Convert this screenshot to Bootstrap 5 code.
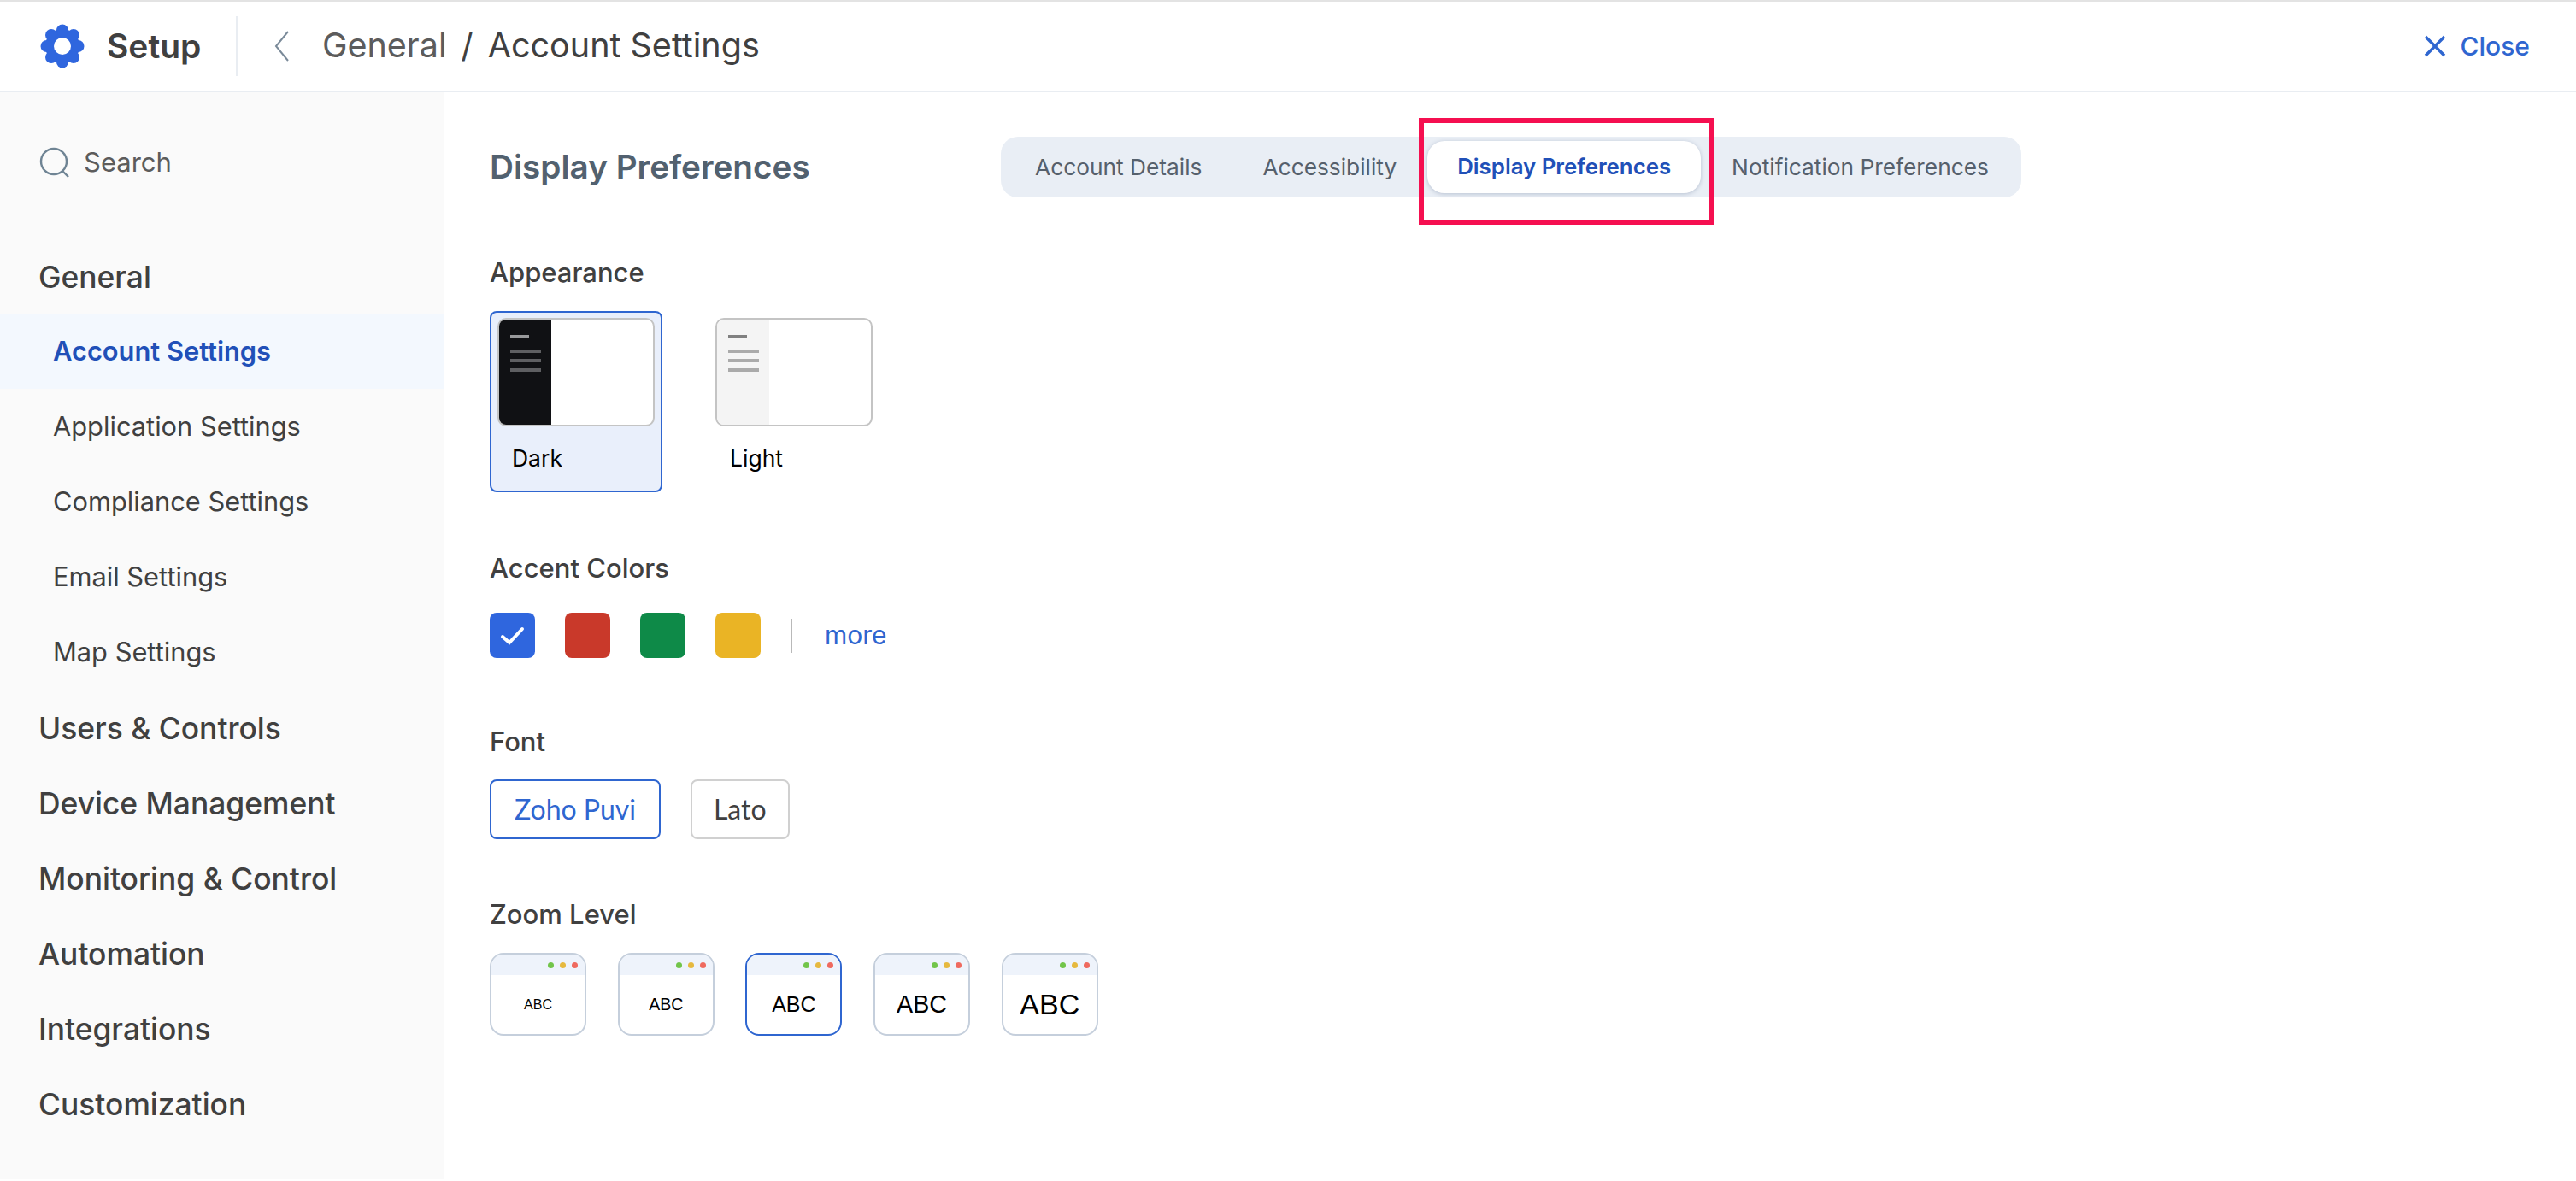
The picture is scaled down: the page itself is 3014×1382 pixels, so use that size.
<!DOCTYPE html>
<html lang="en">
<head>
    <meta charset="UTF-8">
    <meta name="viewport" content="width=device-width, initial-scale=1.0">
    <title>Display Preferences</title>
    <link href="https://cdn.jsdelivr.net/npm/bootstrap@5.3.0/dist/css/bootstrap.min.css" rel="stylesheet">
    <style>
        body { font-family: Inter, "Liberation Sans", sans-serif; color: #404040; background: #fff; height: 1382px; overflow: hidden; border-top: 2px solid #e3e3e3; }
        .top-bar { height: 106px; border-bottom: 2px solid #e9edf2; padding: 0 54px 0 47px; }
        .gear-icon { width: 52px; height: 52px; margin-right: 26px; }
        .app-name { font-size: 39px; font-weight: 600; width: 151px; }
        .bar-sep { width: 2px; height: 70px; background: #e9edf2; margin-right: 42px; }
        .back-icon { width: 20px; height: 38px; margin-right: 37px; }
        .crumb { font-size: 39.5px; color: #404040; }
        .crumb-root { color: #5c5c5c; }
        .crumb-slash { margin: 0 17px; }
        .close-link { color: #2f66d0; font-size: 30px; font-weight: 500; text-decoration: none; }
        .close-link svg { width: 26px; height: 26px; margin-right: 17px; }
        .side-col { width: 520px; height: 1272px; background: #fafafa; flex: none; }
        .side-search { height: 164px; padding-left: 46px; margin-bottom: 7px; color: #5c5c5c; font-size: 31px; }
        .side-search svg { width: 36px; height: 36px; margin-right: 16px; }
        .side-group, .side-item { height: 88px; display: flex; align-items: center; text-decoration: none; }
        .side-group { padding: 3px 0 0 45px; font-size: 35.4px; font-weight: 500; color: #404040; }
        .side-item { padding-left: 62px; font-size: 30.8px; color: #404040; }
        .side-item.active { background: #f3f8fe; color: #2150b8; font-weight: 600; }
        .main-col { padding: 52px 0 0 53px; }
        .page-title { width: 598px; font-size: 38.7px; font-weight: 600; color: #52616f; }
        .tab-strip { width: 1194px; height: 71px; padding: 5px; background: #e9eef5; border-radius: 20px; gap: 1px; position: relative; }
        .tab-btn { padding: 0 35px; font-size: 26.3px; color: #56606c; display: flex; align-items: center; text-decoration: none; white-space: nowrap; }
        .tab-btn.active { background: #fff; color: #2150b8; font-size: 25.8px; font-weight: 600; border-radius: 20px; box-shadow: 0 1px 5px rgba(70, 90, 130, .3); }
        .mark-box { position: absolute; left: 489px; top: -22px; width: 346px; height: 125px; border: 6px solid #f50f50; pointer-events: none; }
        .sec-head { height: 40px; line-height: 40px; font-size: 31px; font-weight: 500; color: #404040; }
        .app-sec { margin-top: 68px; }
        .theme-row { margin-top: 25px; gap: 53px; }
        .theme-card { width: 202px; height: 212px; padding: 6px 7px; border: 2px solid transparent; border-radius: 8px; color: #000; font-size: 26.5px; }
        .theme-card.active { border-color: #2f66d0; background: #e9effb; }
        .theme-thumb { height: 127px; border: 2px solid #c4c4c4; border-radius: 10px; background: #fff; overflow: hidden; margin-bottom: 20px; }
        .thumb-side { width: 61px; height: 100%; padding: 18px 0 0 13px; background: #f4f4f4; }
        .thumb-side i { display: block; width: 36px; height: 4px; margin-bottom: 7px; background: #aaa; }
        .thumb-side i:first-child { width: 22px; margin-bottom: 13px; background: #808080; }
        .thumb-dark .thumb-side { background: #101114; }
        .thumb-dark .thumb-side i { background: #5e5f62; }
        .thumb-dark .thumb-side i:first-child { background: #98999b; }
        .theme-name { padding-left: 17px; line-height: 34px; }
        .acc-sec { margin-top: 69px; }
        .swatch-row { margin-top: 32px; }
        .swatch { width: 53px; height: 53px; border-radius: 8px; margin-right: 35px; }
        .swatch svg { width: 30px; height: 24px; }
        .swatch-blue { background: #2f66de; }
        .swatch-red { background: #c9392a; }
        .swatch-green { background: #0e8a48; }
        .swatch-yellow { background: #eab425; }
        .swatch-sep { width: 2px; height: 40px; background: #b9b9b9; }
        .more-link { margin-left: 38px; color: #2f66d0; font-size: 30px; text-decoration: none; }
        .font-sec { margin-top: 78px; }
        .font-row { margin-top: 24px; gap: 35px; }
        .font-btn { height: 70px; padding: 0 27px; border: 2px solid #d0d0d0; border-radius: 8px; background: #fff; color: #404040; font-size: 32px; font-family: Lato, sans-serif; line-height: 1; display: flex; align-items: center; }
        .font-btn + .font-btn { padding: 0 25px; }
        .font-btn.active { border-color: #2f66d0; color: #2f66d0; }
        .zoom-sec { margin-top: 68px; }
        .zoom-row { margin-top: 25px; }
        .zoom-card { width: 113px; height: 97px; border: 2px solid #c5cfdc; border-radius: 16px; background: #fff; overflow: hidden; margin-right: 36.7px; color: #000; font-family: "Liberation Sans", sans-serif; }
        .zoom-card.active { border-color: #2f66d0; }
        .zoom-bar { height: 24px; padding-right: 8px; background: #eef3fb; gap: 7px; }
        .zoom-bar i { width: 7px; height: 7px; border-radius: 50%; }
        .zoom-abc { height: 69px; }
        .dot-g { background: #72c54a; }
        .dot-y { background: #e6b93f; }
        .dot-r { background: #ef6a5f; }
        .abc-1 { font-size: 16px; }
        .abc-2 { font-size: 19.5px; }
        .abc-3 { font-size: 25px; }
        .abc-4 { font-size: 28.7px; }
        .abc-5 { font-size: 34px; }
    </style>
</head>
<body>
    <header class="top-bar d-flex align-items-center">
        <svg class="gear-icon" viewBox="0 0 52 52" fill="#2f66de">
            <circle cx="26" cy="26" r="20"/>
            <circle cx="26" cy="7.5" r="7"/><circle cx="39" cy="13" r="7"/><circle cx="44.5" cy="26" r="7"/><circle cx="39" cy="39" r="7"/>
            <circle cx="26" cy="44.5" r="7"/><circle cx="13" cy="39" r="7"/><circle cx="7.5" cy="26" r="7"/><circle cx="13" cy="13" r="7"/>
            <circle cx="26" cy="26" r="10" fill="#fff"/>
        </svg>
        <div class="app-name">Setup</div>
        <div class="bar-sep"></div>
        <svg class="back-icon" viewBox="0 0 20 38" fill="none" stroke="#7a8a99" stroke-width="2"><path d="M17 2 3 19l14 17"/></svg>
        <div class="crumb"><span class="crumb-root">General</span><span class="crumb-slash">/</span>Account Settings</div>
        <a href="#" class="close-link ms-auto d-flex align-items-center">
            <svg viewBox="0 0 26 26" fill="none" stroke="#2f66d0" stroke-width="3.4"><path d="M2 2l22 22M24 2 2 24"/></svg>Close
        </a>
    </header>
    <div class="d-flex">
        <nav class="side-col">
            <div class="side-search d-flex align-items-center">
                <svg viewBox="0 0 36 36" fill="none" stroke="#6f8494" stroke-width="2.4"><circle cx="17" cy="17" r="15"/><path d="M27 28l7 7"/></svg>Search
            </div>
            <div class="side-group">General</div>
            <a href="#" class="side-item active">Account Settings</a>
            <a href="#" class="side-item">Application Settings</a>
            <a href="#" class="side-item">Compliance Settings</a>
            <a href="#" class="side-item">Email Settings</a>
            <a href="#" class="side-item">Map Settings</a>
            <div class="side-group">Users &amp; Controls</div>
            <div class="side-group">Device Management</div>
            <div class="side-group">Monitoring &amp; Control</div>
            <div class="side-group">Automation</div>
            <div class="side-group">Integrations</div>
            <div class="side-group">Customization</div>
        </nav>
        <main class="main-col flex-grow-1">
            <div class="d-flex align-items-center">
                <div class="page-title">Display Preferences</div>
                <div class="tab-strip d-flex">
                    <a href="#" class="tab-btn">Account Details</a>
                    <a href="#" class="tab-btn">Accessibility</a>
                    <a href="#" class="tab-btn active">Display Preferences</a>
                    <a href="#" class="tab-btn">Notification Preferences</a>
                    <div class="mark-box"></div>
                </div>
            </div>

            <div class="sec-head app-sec">Appearance</div>
            <div class="d-flex theme-row">
                <div class="theme-card active">
                    <div class="theme-thumb thumb-dark"><div class="thumb-side"><i></i><i></i><i></i><i></i></div></div>
                    <div class="theme-name">Dark</div>
                </div>
                <div class="theme-card">
                    <div class="theme-thumb"><div class="thumb-side"><i></i><i></i><i></i><i></i></div></div>
                    <div class="theme-name">Light</div>
                </div>
            </div>

            <div class="sec-head acc-sec">Accent Colors</div>
            <div class="d-flex align-items-center swatch-row">
                <div class="swatch d-flex align-items-center justify-content-center swatch-blue">
                    <svg viewBox="0 0 30 24" fill="none" stroke="#fff" stroke-width="4" stroke-linecap="round"><path d="M3 13l8 7L26 4"/></svg>
                </div>
                <div class="swatch swatch-red"></div>
                <div class="swatch swatch-green"></div>
                <div class="swatch swatch-yellow"></div>
                <div class="swatch-sep"></div>
                <a href="#" class="more-link">more</a>
            </div>

            <div class="sec-head font-sec">Font</div>
            <div class="d-flex font-row">
                <button class="btn font-btn active">Zoho Puvi</button>
                <button class="btn font-btn">Lato</button>
            </div>

            <div class="sec-head zoom-sec">Zoom Level</div>
            <div class="d-flex zoom-row">
                <div class="zoom-card"><div class="zoom-bar d-flex align-items-center justify-content-end"><i class="dot-g"></i><i class="dot-y"></i><i class="dot-r"></i></div><div class="zoom-abc d-flex align-items-center justify-content-center abc-1">ABC</div></div>
                <div class="zoom-card"><div class="zoom-bar d-flex align-items-center justify-content-end"><i class="dot-g"></i><i class="dot-y"></i><i class="dot-r"></i></div><div class="zoom-abc d-flex align-items-center justify-content-center abc-2">ABC</div></div>
                <div class="zoom-card active"><div class="zoom-bar d-flex align-items-center justify-content-end"><i class="dot-g"></i><i class="dot-y"></i><i class="dot-r"></i></div><div class="zoom-abc d-flex align-items-center justify-content-center abc-3">ABC</div></div>
                <div class="zoom-card"><div class="zoom-bar d-flex align-items-center justify-content-end"><i class="dot-g"></i><i class="dot-y"></i><i class="dot-r"></i></div><div class="zoom-abc d-flex align-items-center justify-content-center abc-4">ABC</div></div>
                <div class="zoom-card"><div class="zoom-bar d-flex align-items-center justify-content-end"><i class="dot-g"></i><i class="dot-y"></i><i class="dot-r"></i></div><div class="zoom-abc d-flex align-items-center justify-content-center abc-5">ABC</div></div>
            </div>
        </main>
    </div>
    <script src="https://cdn.jsdelivr.net/npm/bootstrap@5.3.0/dist/js/bootstrap.bundle.min.js"></script>
</body>
</html>
